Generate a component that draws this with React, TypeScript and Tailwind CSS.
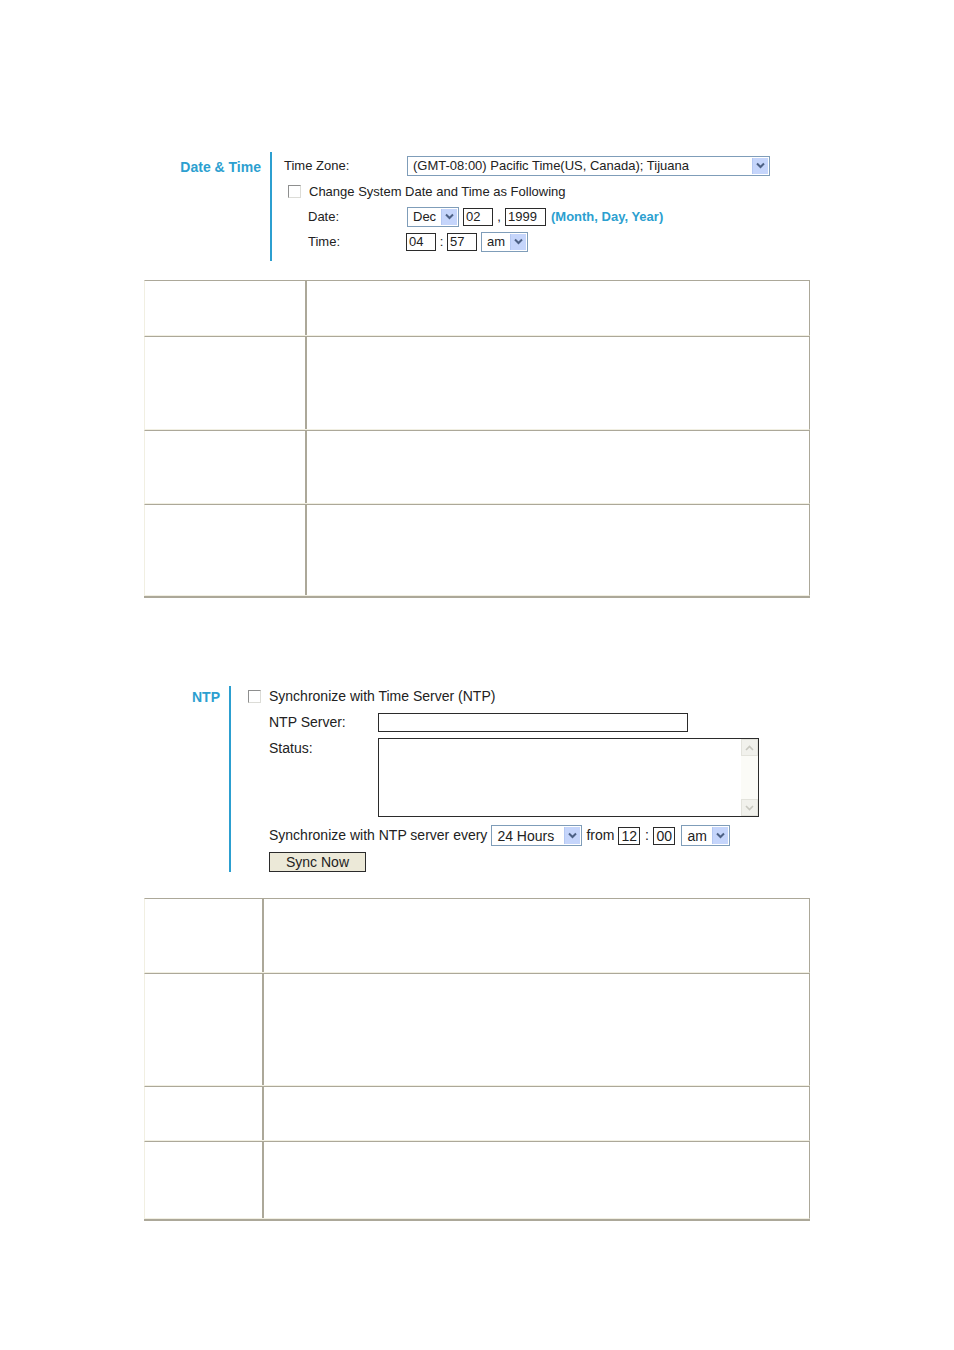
import React from 'react'

const font = { fontFamily: '"Liberation Sans", Arial, sans-serif' }

function Arrow() {
  return (
    <span className="flex items-center justify-center w-[16px] h-full bg-[#c5d5fb] border-l border-[#b4c8f2]">
      <svg width="9" height="7" viewBox="0 0 9 7">
        <path d="M1 1.5 L4.5 5 L8 1.5" fill="none" stroke="#4d6185" strokeWidth="2" />
      </svg>
    </span>
  )
}

function Select({ value, w, h = 20 }: { value: string; w: number; h?: number }) {
  return (
    <div
      className="flex items-stretch border border-[#7f9db9] bg-white p-[1px]"
      style={{ width: w, height: h }}
    >
      <span className="flex-1 pl-[4px] leading-none flex items-center">{value}</span>
      <Arrow />
    </div>
  )
}

function Box({ value, w }: { value: string; w: number }) {
  return (
    <div
      className="h-[18px] border border-[#2b2b2b] bg-white pl-[2px] flex items-center leading-none"
      style={{ width: w }}
    >
      {value}
    </div>
  )
}

function Check() {
  return <span className="inline-block w-[13px] h-[13px] border border-[#8e8f8f] border-r-[#dcdcd7] border-b-[#dcdcd7] bg-white" />
}

function Table({ col, rows }: { col: number; rows: number[] }) {
  return (
    <div className="w-[666px] ml-[144px] border-b-2 border-[#aca899]">
      {rows.map((h, i) => (
        <div
          key={i}
          className="flex border-t border-[#aca899] border-l border-l-[#f1efe2] border-r border-r-[#aca899] border-b border-b-[#f1efe2]"
          style={{ height: h }}
        >
          <div style={{ width: col }} />
          <div className="flex-1 border-l-2 border-[#aca899]" />
        </div>
      ))}
    </div>
  )
}

export default function App() {
  return (
    <div className="w-[954px] h-[1350px] bg-white text-[#222] text-[13px]" style={font}>
      <div className="h-[152px]" />

      {/* Date & Time */}
      <div className="flex ml-[170px] w-[600px] h-[109px]">
        <div className="w-[100px] text-right pr-[9px] pt-[5px] font-bold text-[#2c9fd0] text-[14px]">
          Date &amp; Time
        </div>
        <div className="flex-1 border-l-2 border-[#2c9fd0] pl-[12px] flex flex-col">
          <div className="flex items-center h-[27px]">
            <span className="w-[123px]">Time Zone:</span>
            <Select value="(GMT-08:00) Pacific Time(US, Canada); Tijuana" w={363} />
          </div>
          <div className="flex items-center h-[25px] pl-[4px] gap-[8px]">
            <Check />
            <span>Change System Date and Time as Following</span>
          </div>
          <div className="flex items-center h-[25px] pl-[24px]">
            <span className="w-[99px]">Date:</span>
            <Select value="Dec" w={52} />
            <span className="w-[4px]" />
            <Box value="02" w={30} />
            <span className="w-[12px] text-center">,</span>
            <Box value="1999" w={41} />
            <span className="ml-[5px] font-bold text-[#2c9fd0]">(Month, Day, Year)</span>
          </div>
          <div className="flex items-center h-[25px] pl-[24px]">
            <span className="w-[98px]">Time:</span>
            <Box value="04" w={30} />
            <span className="w-[11px] text-center">:</span>
            <Box value="57" w={30} />
            <span className="w-[4px]" />
            <Select value="am" w={47} />
          </div>
        </div>
      </div>

      <div className="h-[19px]" />
      <Table col={160} rows={[56, 94, 74, 92]} />

      <div className="h-[88px]" />

      {/* NTP */}
      <div className="flex ml-[170px] w-[600px] h-[186px] text-[14px]">
        <div className="w-[59px] text-right pr-[9px] pt-[1px] font-bold text-[#2c9fd0]">NTP</div>
        <div className="flex-1 border-l-2 border-[#2c9fd0] pl-[17px] flex flex-col">
          <div className="flex items-center h-[21px] gap-[8px]">
            <Check />
            <span>Synchronize with Time Server (NTP)</span>
          </div>
          <div className="flex items-center h-[26px] pl-[21px] mt-[3px]">
            <span className="w-[109px]">NTP Server:</span>
            <div className="w-[310px] h-[19px] border border-[#2b2b2b] bg-white" />
          </div>
          <div className="flex pl-[21px] mt-[3px]">
            <span className="w-[109px]">Status:</span>
            <div className="w-[381px] h-[79px] border border-[#2b2b2b] bg-white flex justify-end">
              <div className="w-[17px] h-full bg-[#fbfbf7] flex flex-col justify-between">
                <div className="h-[17px] flex items-center justify-center bg-[#f1f1ec] border border-[#e3e3dc]">
                  <svg width="9" height="6" viewBox="0 0 9 6"><path d="M1 5 L4.5 1.5 L8 5" fill="none" stroke="#c8c8c0" strokeWidth="1.6" /></svg>
                </div>
                <div className="h-[17px] flex items-center justify-center bg-[#f1f1ec] border border-[#e3e3dc]">
                  <svg width="9" height="6" viewBox="0 0 9 6"><path d="M1 1 L4.5 4.5 L8 1" fill="none" stroke="#c8c8c0" strokeWidth="1.6" /></svg>
                </div>
              </div>
            </div>
          </div>
          <div className="flex items-center h-[21px] pl-[21px] mt-[8px]">
            <span>Synchronize with NTP server every</span>
            <span className="w-[4px]" />
            <Select value="24 Hours" w={91} h={21} />
            <span className="mx-[4px]">from</span>
            <Box value="12" w={22} />
            <span className="w-[13px] text-center">:</span>
            <Box value="00" w={22} />
            <span className="w-[6px]" />
            <Select value="am" w={49} h={21} />
          </div>
          <div className="pl-[21px] mt-[6px]">
            <div className="w-[97px] h-[20px] border border-[#2b2b2b] bg-[#ece9d8] flex items-center justify-center leading-none">
              Sync Now
            </div>
          </div>
        </div>
      </div>

      <div className="h-[26px]" />
      <Table col={117} rows={[75, 113, 55, 78]} />
    </div>
  )
}
